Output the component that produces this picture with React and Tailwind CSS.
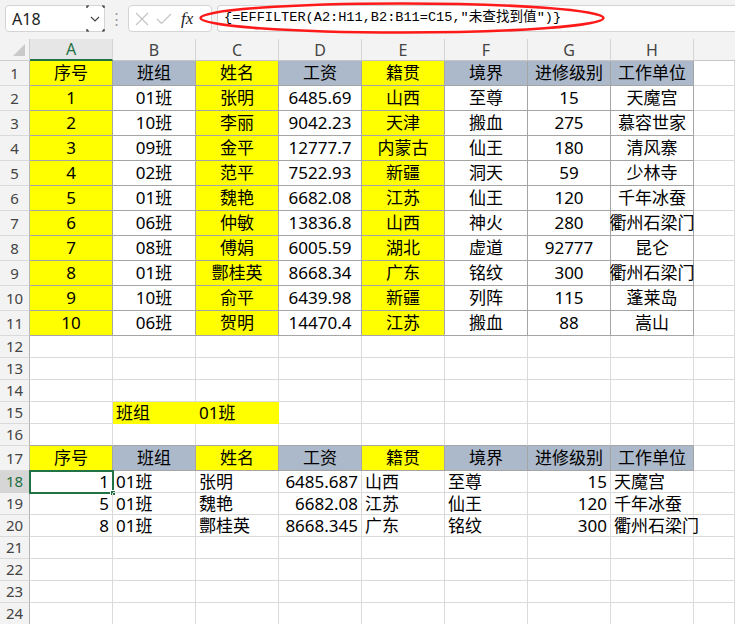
import React from 'react';

const COLS = ['A', 'B', 'C', 'D', 'E', 'F', 'G', 'H'];
const HEAD = ['序号', '班组', '姓名', '工资', '籍贯', '境界', '进修级别', '工作单位'];

const DATA = [
  ['1', '01班', '张明', '6485.69', '山西', '至尊', '15', '天魔宫'],
  ['2', '10班', '李丽', '9042.23', '天津', '搬血', '275', '慕容世家'],
  ['3', '09班', '金平', '12777.7', '内蒙古', '仙王', '180', '清风寨'],
  ['4', '02班', '范平', '7522.93', '新疆', '洞天', '59', '少林寺'],
  ['5', '01班', '魏艳', '6682.08', '江苏', '仙王', '120', '千年冰蚕'],
  ['6', '06班', '仲敏', '13836.8', '山西', '神火', '280', '衢州石梁门'],
  ['7', '08班', '傅娟', '6005.59', '湖北', '虚道', '92777', '昆仑'],
  ['8', '01班', '酆桂英', '8668.34', '广东', '铭纹', '300', '衢州石梁门'],
  ['9', '10班', '俞平', '6439.98', '新疆', '列阵', '115', '蓬莱岛'],
  ['10', '06班', '贺明', '14470.4', '江苏', '搬血', '88', '嵩山'],
];

const RESULT = [
  ['1', '01班', '张明', '6485.687', '山西', '至尊', '15', '天魔宫'],
  ['5', '01班', '魏艳', '6682.08', '江苏', '仙王', '120', '千年冰蚕'],
  ['8', '01班', '酆桂英', '8668.345', '广东', '铭纹', '300', '衢州石梁门'],
];

const BG = { y: 'bg-[#ffff00]', h: 'bg-[#acb9ca]', w: 'bg-white', n: '' };
const BR = { d: 'border-r-[#a5a5a5]', l: 'border-r-[#dadada]', y: 'border-r-[#ffff00]' };
const BB = { d: 'border-b-[#a5a5a5]', l: 'border-b-[#dadada]', y: 'border-b-[#ffff00]' };
const AL = { c: 'justify-center', l: 'justify-start pl-[3px]', r: 'justify-end pr-[3px]' };
const H = { 25: 'h-[25px]', 22: 'h-[22px]' };

const isYellowCol = (i) => i === 0 || i === 2 || i === 4;

// build the sheet rows: [rowNumber, height, cells[]]
function buildRows() {
  const rows = [];
  rows.push([1, 25, HEAD.map((t, i) => ({ v: t, bg: isYellowCol(i) ? 'y' : 'h', al: 'c', br: 'd', bb: 'd' }))]);
  DATA.forEach((r, k) => {
    rows.push([k + 2, 25, r.map((t, i) => ({ v: t, bg: isYellowCol(i) ? 'y' : 'w', al: 'c', br: 'd', bb: 'd' }))]);
  });
  for (let n = 12; n <= 16; n++) {
    const cells = COLS.map(() => ({ v: '', bg: 'n', al: 'c', br: 'l', bb: n === 16 ? 'd' : 'l' }));
    if (n === 15) {
      cells[1] = { v: '班组', bg: 'y', al: 'l', br: 'y', bb: 'y' };
      cells[2] = { v: '01班', bg: 'y', al: 'l', br: 'y', bb: 'y' };
    }
    rows.push([n, 22, cells]);
  }
  rows.push([17, 25, HEAD.map((t, i) => ({ v: t, bg: isYellowCol(i) ? 'y' : 'h', al: 'c', br: 'd', bb: 'd' }))]);
  RESULT.forEach((r, k) => {
    rows.push([k + 18, 22, r.map((t, i) => ({
      v: t, bg: 'n', al: i === 0 || i === 3 || i === 6 ? 'r' : 'l', br: 'l', bb: 'l', sel: k === 0 && i === 0,
    }))]);
  });
  for (let n = 21; n <= 24; n++) {
    rows.push([n, 22, COLS.map(() => ({ v: '', bg: 'n', al: 'c', br: 'l', bb: 'l' }))]);
  }
  return rows;
}

const Cell = ({ c }) => (
  <div
    className={`relative w-[83px] shrink-0 flex items-center whitespace-nowrap border-r border-b ${BG[c.bg]} ${BR[c.br]} ${BB[c.bb]} ${AL[c.al]}`}
  >
    <span>{c.v}</span>
    {c.sel && (
      <div className="absolute -left-px -top-px w-[85px] h-[24px] border-2 border-[#217346]">
        <div className="absolute -right-[4px] -bottom-[4px] w-[6px] h-[6px] bg-[#217346] border border-white" />
      </div>
    )}
  </div>
);

const FormulaBar = () => (
  <div className="relative h-[39px] bg-[#f3f3f3] flex items-start pt-[5px]">
    <div className="ml-[5px] w-[100px] h-[27px] bg-white border border-[#d4d4d4] rounded-[4px] flex items-center">
      <span className="pl-[6px] flex-1 text-[16px] text-[#222]">A18</span>
      <div className="relative w-[18px] h-full flex items-center justify-center">
        <svg width="19" height="27" viewBox="0 0 19 27" className="absolute -top-px left-0">
          <path d="M1 3V1H3M16 1H18V3M1 24V26H3M16 26H18V24" fill="none" stroke="#222" strokeWidth="1.2" />
        </svg>
        <svg width="10" height="6" viewBox="0 0 10 6">
          <path d="M1 1L5 5L9 1" fill="none" stroke="#444" strokeWidth="1.2" />
        </svg>
      </div>
    </div>
    <div className="w-[23px] h-[27px] flex items-center justify-center text-[#9a9a9a] text-[15px]">⋮</div>
    <div className="w-[84px] h-[27px] bg-white border border-[#d4d4d4] rounded-[4px] flex items-center pl-[5px]">
      <svg width="14" height="14" viewBox="0 0 14 14" className="ml-[1px]">
        <path d="M1 1L13 13M13 1L1 13" stroke="#c4c4c4" strokeWidth="1.2" />
      </svg>
      <svg width="16" height="12" viewBox="0 0 16 12" className="ml-[7px]">
        <path d="M1 6L5.5 10.5L15 1" fill="none" stroke="#c4c4c4" strokeWidth="1.2" />
      </svg>
      <span className="ml-[9px] italic text-[17px] text-[#222]" style={{ fontFamily: '"Liberation Serif", serif' }}>fx</span>
    </div>
    <div className="ml-[5px] flex-1 h-[27px] bg-white border-y border-l border-[#d4d4d4] rounded-l-[4px] flex items-center pl-[6px]">
      <span
        className="text-[13.6px] text-black whitespace-nowrap"
        style={{ fontFamily: '"Liberation Mono", "Noto Sans CJK SC", monospace' }}
      >
        {'{=EFFILTER(A2:H11,B2:B11=C15,"未查找到值")}'}
      </span>
    </div>
    {/* red annotation ellipse */}
    <svg className="absolute left-[198px] top-[1px]" width="408" height="34" viewBox="0 0 408 34">
      <ellipse cx="204" cy="17" rx="201.5" ry="14.5" fill="none" stroke="#ff1a1a" strokeWidth="2.6" />
    </svg>
  </div>
);

export default function App() {
  const rows = buildRows();
  return (
    <div
      className="w-[735px] h-[624px] overflow-hidden bg-white text-[17px] text-black"
      style={{ fontFamily: '"Noto Sans", "Noto Sans CJK SC", sans-serif' }}
    >
      <FormulaBar />
      {/* column headers */}
      <div className="flex h-[22px] bg-[#f3f3f3]">
        <div className="w-[30px] shrink-0 border-r border-b border-[#cfcfcf] flex items-end justify-end pr-[4px] pb-[4px]">
          <svg width="12" height="12" viewBox="0 0 12 12">
            <path d="M12 0V12H0Z" fill="#c9c9c9" />
          </svg>
        </div>
        {COLS.map((c, i) => (
          <div
            key={c}
            className={
              i === 0
                ? 'w-[83px] shrink-0 flex items-center justify-center border-r border-r-[#d4d4d4] border-b-2 border-b-[#217346] bg-[#e6e6e6] text-[16px] text-[#1e6f42]'
                : 'w-[83px] shrink-0 flex items-center justify-center border-r border-r-[#d4d4d4] border-b border-b-[#c6c6c6] text-[16px] text-[#444]'
            }
          >
            {c}
          </div>
        ))}
        <div className="flex-1 border-b border-[#c6c6c6]" />
      </div>
      {rows.map(([n, h, cells]) => (
        <div key={n} className={`flex ${H[h]}`}>
          <div
            className={
              n === 18
                ? 'w-[30px] shrink-0 flex items-center justify-center bg-[#d6d6d6] border-r border-r-[#b5b5b5] border-b border-b-[#d4d4d4] text-[15px] text-[#1e6f42]'
                : 'w-[30px] shrink-0 flex items-center justify-center bg-[#f3f3f3] border-r border-r-[#b5b5b5] border-b border-b-[#d9d9d9] text-[15px] text-[#444]'
            }
          >
            {n}
          </div>
          {cells.map((c, i) => (
            <Cell key={i} c={c} />
          ))}
          <div className="flex-1 border-r border-b border-[#dadada]" />
        </div>
      ))}
    </div>
  );
}
